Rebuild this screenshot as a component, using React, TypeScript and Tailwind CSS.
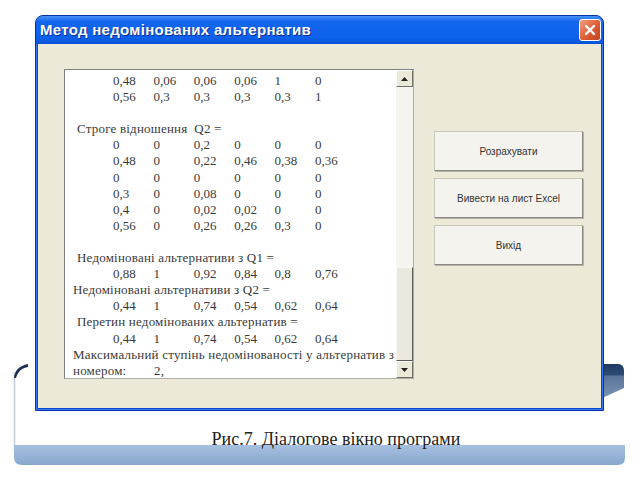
import React from 'react';

type Line =
  | { kind: 'nums'; nums: string[] }
  | { kind: 'label'; text: string; indent: number }
  | { kind: 'blank' }
  | { kind: 'last' };

const lines: Line[] = [
  { kind: 'nums', nums: ['0,48', '0,06', '0,06', '0,06', '1', '0'] },
  { kind: 'nums', nums: ['0,56', '0,3', '0,3', '0,3', '0,3', '1'] },
  { kind: 'blank' },
  { kind: 'label', text: 'Строге відношення  Q2 =', indent: 12 },
  { kind: 'nums', nums: ['0', '0', '0,2', '0', '0', '0'] },
  { kind: 'nums', nums: ['0,48', '0', '0,22', '0,46', '0,38', '0,36'] },
  { kind: 'nums', nums: ['0', '0', '0', '0', '0', '0'] },
  { kind: 'nums', nums: ['0,3', '0', '0,08', '0', '0', '0'] },
  { kind: 'nums', nums: ['0,4', '0', '0,02', '0,02', '0', '0'] },
  { kind: 'nums', nums: ['0,56', '0', '0,26', '0,26', '0,3', '0'] },
  { kind: 'blank' },
  { kind: 'label', text: 'Недоміновані альтернативи з Q1 =', indent: 12 },
  { kind: 'nums', nums: ['0,88', '1', '0,92', '0,84', '0,8', '0,76'] },
  { kind: 'label', text: 'Недоміновані альтернативи з Q2 =', indent: 8 },
  { kind: 'nums', nums: ['0,44', '1', '0,74', '0,54', '0,62', '0,64'] },
  { kind: 'label', text: 'Перетин недомінованих альтернатив =', indent: 12 },
  { kind: 'nums', nums: ['0,44', '1', '0,74', '0,54', '0,62', '0,64'] },
  { kind: 'label', text: 'Максимальний ступінь недомінованості у альтернатив з', indent: 8 },
  { kind: 'last' },
];

const ListLine = ({ line }: { line: Line }) => {
  if (line.kind === 'blank') return <div className="h-[16.1px]" />;
  if (line.kind === 'label')
    return (
      <div className="h-[16.1px] whitespace-pre tracking-[0.2px]" style={{ paddingLeft: line.indent }}>
        {line.text}
      </div>
    );
  if (line.kind === 'last')
    return (
      <div className="h-[16.1px] flex pl-[8px] tracking-[0.2px]">
        <span className="w-[81px]">номером:</span>
        <span>2,</span>
      </div>
    );
  return (
    <div className="h-[16.1px] grid grid-cols-[repeat(6,40.4px)] pl-[48px]">
      {line.nums.map((n, i) => (
        <span key={i}>{n}</span>
      ))}
    </div>
  );
};

const Arrow = ({ up }: { up?: boolean }) => (
  <svg width="7" height="4" viewBox="0 0 7 4">
    {up ? <polygon points="0,4 7,4 3.5,0" fill="#222" /> : <polygon points="0,0 7,0 3.5,4" fill="#222" />}
  </svg>
);

const ScrollButton = ({ up }: { up?: boolean }) => (
  <div className="h-[17px] flex items-center justify-center bg-[#ece9d8] border border-t-white border-l-white border-r-[#716f64] border-b-[#716f64]">
    <Arrow up={up} />
  </div>
);

const XpButton = ({ label }: { label: string }) => (
  <button className="h-[40px] w-[149px] bg-[#f4f3ee] border border-[#c9c7ba] border-r-[#8c8a80] border-b-[#8c8a80] shadow-[1px_1px_0_#b5b3a8] text-[10px] text-[#333] font-['Liberation_Sans',sans-serif]">
    {label}
  </button>
);

export default function App() {
  return (
    <div className="relative w-[640px] h-[480px] bg-white overflow-hidden">
      {/* slide decoration behind the dialog */}
      <svg className="absolute left-0 top-0" width="640" height="480" viewBox="0 0 640 480">
        <defs>
          <linearGradient id="bar" x1="0" y1="0" x2="0" y2="1">
            <stop offset="0" stopColor="#a7c0e0" />
            <stop offset="1" stopColor="#87a7cf" />
          </linearGradient>
          <linearGradient id="blk" x1="0" y1="0" x2="0" y2="1">
            <stop offset="0" stopColor="#1f3b63" />
            <stop offset="0.3" stopColor="#2c4a74" />
            <stop offset="0.35" stopColor="#5a7399" />
            <stop offset="1" stopColor="#7d93b3" />
          </linearGradient>
        </defs>
        <line x1="14.5" y1="372" x2="14.5" y2="450" stroke="#c3ccd9" strokeWidth="1.5" />
        <path d="M14 378 C15 370 19 366 28 364 L28 367 C22 368 18 371 16 378 Z" fill="#1c2f52" />
        <path d="M14 445 H625 V458 Q625 465 618 465 H22 Q14 465 14 457 Z" fill="url(#bar)" />
        <path d="M600 364 H618 Q624 364 624 371 V388 L600 399 Z" fill="url(#blk)" />
      </svg>

      <div className="relative pl-[35px] pt-[15px]">
        {/* dialog window */}
        <div className="w-[569px] h-[396px] rounded-t-[8px] bg-[#0a47d6] border border-[#0831a8] flex flex-col shadow-[inset_0_0_0_1px_#3a78ee]">
          <div className="h-[28px] rounded-t-[7px] bg-[linear-gradient(#4a92fa,#1266ee_20%,#0c60ea_80%,#0a52d6)] flex items-center justify-between pl-[4px] pr-[2px]">
            <span className="text-white font-bold text-[15px] tracking-[0.3px] font-['Liberation_Sans',sans-serif] [text-shadow:1px_1px_0_#0a2f99]">
              Метод недомінованих альтернатив
            </span>
            <div className="w-[22px] h-[22px] rounded-[3px] border border-white bg-[linear-gradient(135deg,#f0a080,#e06138_50%,#c4401e)] flex items-center justify-center">
              <svg width="12" height="12" viewBox="0 0 12 12">
                <path d="M2 2 L10 10 M10 2 L2 10" stroke="white" strokeWidth="2.4" strokeLinecap="round" />
              </svg>
            </div>
          </div>

          <div className="flex-1 mx-[2px] mb-[2px] bg-[#ece9d8] flex items-start">
            {/* listbox */}
            <div className="ml-[26px] mt-[25px] w-[350px] h-[310px] bg-white border border-[#7f7f7f] border-b-[#b0aea4] border-r-[#b0aea4] flex">
              <div className="flex-1 pt-[3px] text-[13px] leading-[16.1px] text-[#3a3a3a] font-['Liberation_Serif',serif] overflow-hidden">
                {lines.map((l, i) => (
                  <ListLine key={i} line={l} />
                ))}
              </div>
              <div className="w-[17px] flex flex-col bg-[#f5f4ef]">
                <ScrollButton up />
                <div className="flex-1 flex flex-col">
                  <div className="mt-auto h-[94px] bg-[#ebe9de] border border-t-[#f8f7f2] border-l-[#f8f7f2] border-r-[#5e5c55] border-b-[#5e5c55]" />
                </div>
                <ScrollButton />
              </div>
            </div>

            {/* buttons */}
            <div className="ml-[20px] mt-[87px] flex flex-col gap-[7px]">
              <XpButton label="Розрахувати" />
              <XpButton label="Вивести на лист Excel" />
              <XpButton label="Вихід" />
            </div>
          </div>
        </div>
      </div>

      <div className="relative mt-[15px] text-center pl-[32px] text-[18px] text-[#222] font-['Liberation_Serif',serif]">
        Рис.7. Діалогове вікно програми
      </div>
    </div>
  );
}
